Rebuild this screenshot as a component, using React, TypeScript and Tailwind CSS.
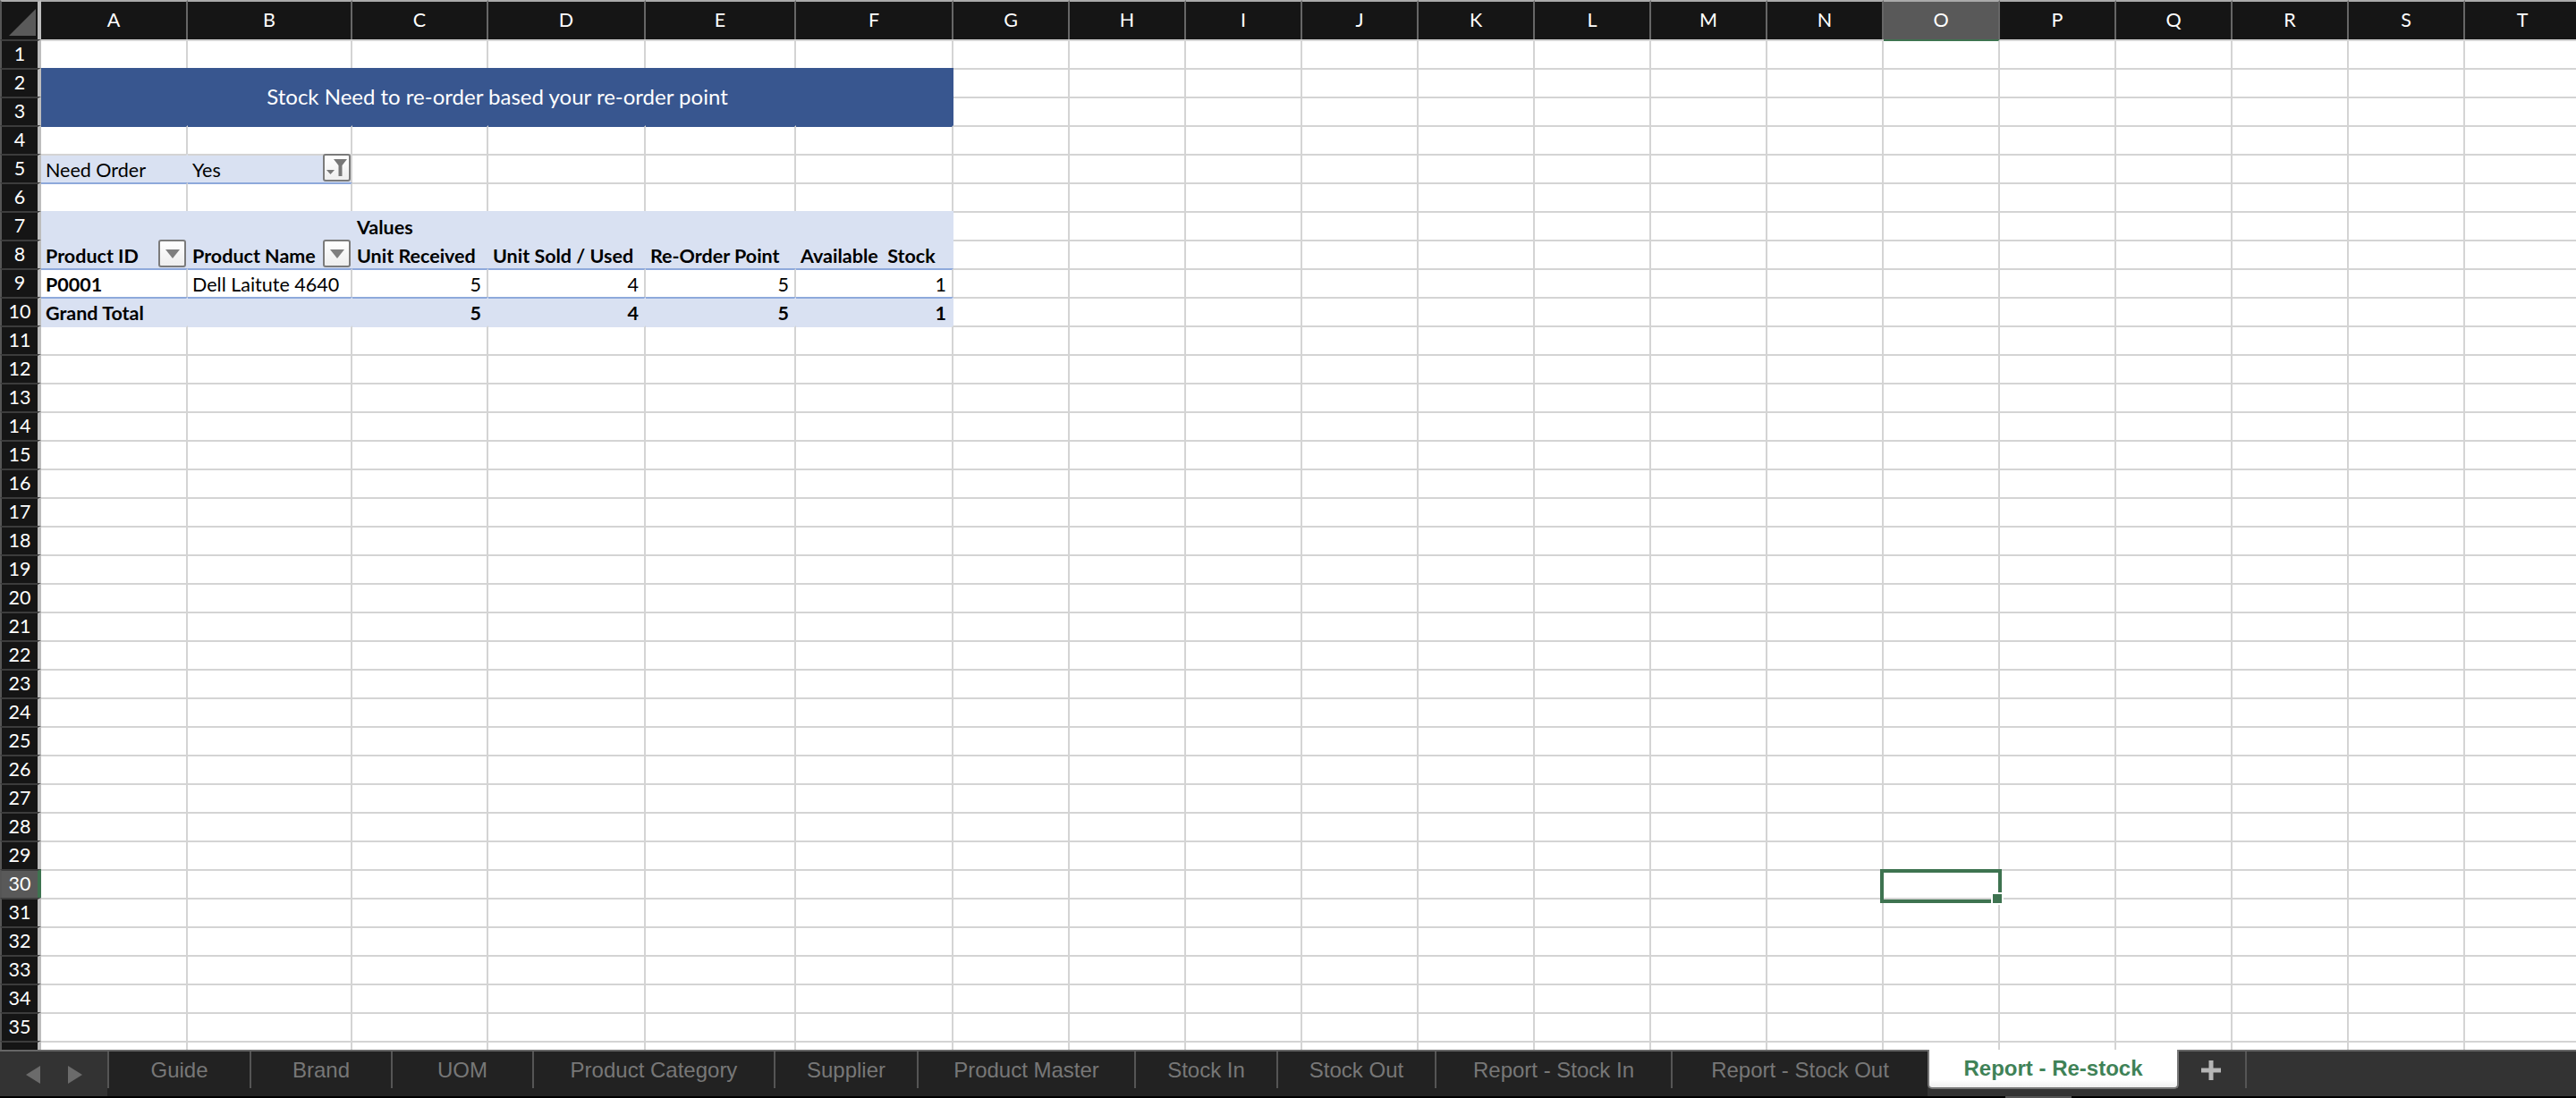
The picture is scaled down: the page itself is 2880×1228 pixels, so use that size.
const COLS = ['A','B','C','D','E','F','G','H','I','J','K','L','M','N','O','P','Q','R','S','T'];

type Content = { text: string; bold?: boolean; right?: boolean };

const CONTENT: Record<string, Content> = {
  'A5': { text: 'Need Order' },
  'B5': { text: 'Yes' },
  'C7': { text: 'Values', bold: true },
  'A8': { text: 'Product ID', bold: true },
  'B8': { text: 'Product Name', bold: true },
  'C8': { text: 'Unit Received', bold: true },
  'D8': { text: 'Unit Sold / Used', bold: true },
  'E8': { text: 'Re-Order Point', bold: true },
  'F8': { text: 'Available\u00a0 Stock', bold: true },
  'A9': { text: 'P0001', bold: true },
  'B9': { text: 'Dell Laitute 4640' },
  'C9': { text: '5', right: true },
  'D9': { text: '4', right: true },
  'E9': { text: '5', right: true },
  'F9': { text: '1', right: true },
  'A10': { text: 'Grand Total', bold: true },
  'C10': { text: '5', bold: true, right: true },
  'D10': { text: '4', bold: true, right: true },
  'E10': { text: '5', bold: true, right: true },
  'F10': { text: '1', bold: true, right: true },
};

function FilterButton({ funnel }: { funnel?: boolean }) {
  return (
    <div className="absolute right-0 bottom-[1px] w-[31px] h-[31px] rounded-[3px] border-2 border-[#7b7b7b] bg-gradient-to-b from-white to-[#eeeeee] flex items-center justify-center">
      {funnel ? (
        <svg width="27" height="27" viewBox="0 0 27 27">
          <polygon points="2,16 11,16 6.5,21" fill="#777777" />
          <polygon points="10,4 25,4 19.5,11 19.5,23 15.5,23 15.5,11" fill="#777777" />
        </svg>
      ) : (
        <svg width="18" height="12" viewBox="0 0 18 12">
          <polygon points="1,1 17,1 9,11" fill="#7f7f7f" />
        </svg>
      )}
    </div>
  );
}

function cellClass(r: number, c: number) {
  const inPivot = c < 6;
  const filled = (r === 5 && c < 2) || ((r === 7 || r === 8 || r === 10) && inPivot);
  let top = 'border-t-[#d4d4d4]';
  if (r === 1 && c === 14) top = 'border-t-[#3e7350]';
  if (r === 4 && inPivot) top = 'border-t-[#38568f]';
  if (r === 6 && c < 2) top = 'border-t-[#8ea9db]';
  if ((r === 7 || r === 8 || r === 11) && inPivot) top = 'border-t-[#d9e1f2]';
  if ((r === 9 || r === 10) && inPivot) top = 'border-t-[#8ea9db]';
  let right = 'border-r-[#d4d4d4]';
  if ((r === 7 || r === 8 || r === 10) && inPivot) right = 'border-r-[#d9e1f2]';
  if (r === 5 && c === 0) right = 'border-r-[#d9e1f2]';
  return `${filled ? 'bg-[#d9e1f2]' : 'bg-white'} ${top} ${right}`;
}

function Cell({ r, c }: { r: number; c: number }) {
  const key = COLS[c] + r;
  const content = CONTENT[key];
  const button = key === 'A8' || key === 'B8' || key === 'B5';
  return (
    <div className={`relative border-t-2 border-r-2 min-w-0 ${cellClass(r, c)}`}>
      {content && (
        <div
          className={`absolute inset-x-0 top-0 h-[30px] leading-[32px] whitespace-nowrap text-[21.5px] text-black ${
            content.right ? 'text-right pr-[6px]' : 'pl-[5px]'
          } ${content.bold ? 'font-bold' : 'font-normal'}`}
        >
          {content.text}
        </div>
      )}
      {button && <FilterButton funnel={key === 'B5'} />}
      {key === 'O30' && (
        <div className="absolute left-[-4px] top-[-2px] w-[136px] h-[38px] border-4 border-[#3e7350] z-10">
          <div className="absolute right-[-6px] bottom-[-6px] w-[14px] h-[14px] bg-[#3e7350] border-2 border-white" />
        </div>
      )}
    </div>
  );
}

function RowHeader({ r }: { r: number }) {
  const current = r === 30;
  return (
    <div
      className={`flex items-center justify-center border-l-2 border-l-[#555555] border-t-2 border-t-[#3c3c3c] border-r-4 text-white text-[21.5px] leading-none ${
        current ? 'bg-[#595959] border-r-[#3e7350]' : 'bg-[#151515] border-r-[#bdbdbd]'
      }`}
    >
      {r <= 35 ? r : ''}
    </div>
  );
}

const TABS: [string, number][] = [
  ['Guide', 159],
  ['Brand', 158],
  ['UOM', 158],
  ['Product Category', 270],
  ['Supplier', 160],
  ['Product Master', 243],
  ['Stock In', 159],
  ['Stock Out', 177],
  ['Report - Stock In', 264],
  ['Report - Stock Out', 287],
];

function TabBar() {
  return (
    <div className="h-[54px] flex flex-col bg-black font-['Liberation_Sans',Arial,sans-serif]">
      <div className="h-[52px] flex bg-[#333333]">
        <div className="w-[120px] border-t-2 border-[#666666] flex items-start">
          <svg width="120" height="50" viewBox="0 0 120 50">
            <polygon points="45,16 45,36 29,26" fill="#6b6b6b" />
            <polygon points="76,16 76,36 92,26" fill="#6b6b6b" />
          </svg>
        </div>
        {TABS.map(([name, w]) => (
          <div
            key={name}
            className="border-t-2 border-[#666666] bg-[#222222]"
            style={{ width: w }}
          >
            <div className="h-[41px] border-l-2 border-[#555555] flex items-center justify-center text-[24px] text-[#777777] whitespace-nowrap">
              {name}
            </div>
          </div>
        ))}
        <div className="w-[281px] h-[44px] bg-gradient-to-b from-white from-80% to-[#efefef] rounded-b-[5px] border-x-2 border-b-2 border-[#777777] border-t-0 flex items-center justify-center text-[24px] font-bold text-[#3f8257] whitespace-nowrap">
          Report - Re-stock
        </div>
        <div className="w-[76px] border-t-2 border-[#666666]">
          <div className="h-[41px] border-r-2 border-[#555555] flex items-center justify-center pr-[2px]">
            <svg width="22" height="22" viewBox="0 0 22 22">
              <rect x="0" y="8.5" width="22" height="5" fill="#b5b5b5" />
              <rect x="8.5" y="0" width="5" height="22" fill="#b5b5b5" />
            </svg>
          </div>
        </div>
        <div className="flex-1 border-t-2 border-[#666666]" />
      </div>
      <div className="h-[2px] flex">
        <div className="ml-[2242px] w-[74px] bg-[#555555]" />
      </div>
    </div>
  );
}

export default function App() {
  const rows = Array.from({ length: 36 }, (_, i) => i + 1);
  return (
    <div className="w-[2880px] h-[1228px] overflow-hidden flex flex-col bg-white font-['Lato',sans-serif]">
      <div className="grid h-[1174px] grid-cols-[46px_164px_184px_152px_176px_168px_176px_repeat(14,130px)] grid-rows-[44px_repeat(35,32px)_10px]">
        <div className="bg-[#151515] border-t-2 border-t-[#aaaaaa] border-l-2 border-l-[#555555] border-r-4 border-r-[#bdbdbd] flex items-start">
          <svg width="40" height="40" viewBox="0 0 40 40">
            <polygon points="38,8 38,38 8,38" fill="#5a5a5a" />
          </svg>
        </div>
        {COLS.map((col, i) => (
          <div
            key={col}
            className={`flex items-center justify-center border-t-2 border-t-[#aaaaaa] border-r-2 border-r-[#666666] text-white text-[21.5px] leading-none ${
              i === 14 ? 'bg-[#595959]' : 'bg-[#151515]'
            }`}
          >
            {col}
          </div>
        ))}
        {rows.map((r) => [
          <RowHeader key={`h${r}`} r={r} />,
          r === 2 ? (
            <div
              key="title"
              className="col-span-6 row-span-2 bg-[#38568f] flex items-center justify-center text-white text-[24px] whitespace-nowrap"
            >
              Stock Need to re-order based your re-order point
            </div>
          ) : null,
          ...COLS.map((_, c) =>
            (r === 2 || r === 3) && c < 6 ? null : <Cell key={`${r}-${c}`} r={r} c={c} />
          ),
        ])}
      </div>
      <TabBar />
    </div>
  );
}
